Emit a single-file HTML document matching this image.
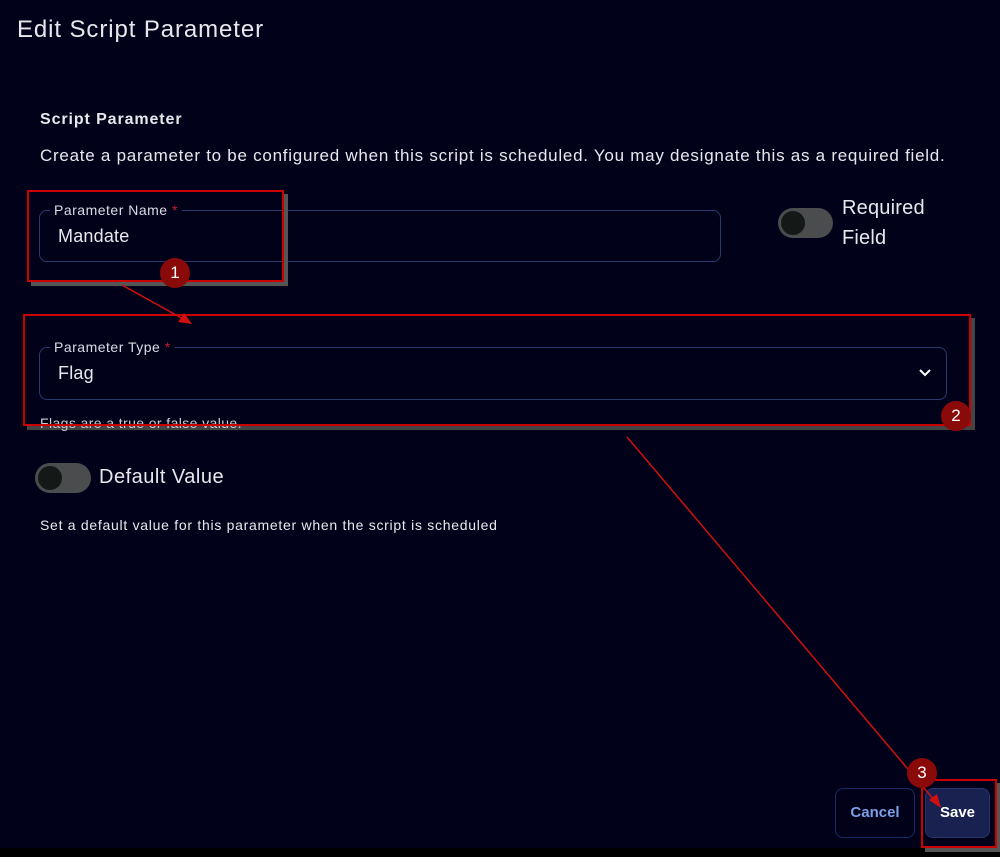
<!DOCTYPE html>
<html><head><style>
*{box-sizing:border-box;margin:0;padding:0}
body{width:1000px;height:857px;background:#02011a;font-family:"Liberation Sans",sans-serif;color:#e8e8ec;position:relative;overflow:hidden}
.a{position:absolute}
.field{position:absolute;border:1px solid #2d3a6e;border-radius:8px}
.lbl{position:absolute;top:-9px;left:10px;background:#02011a;padding:0 4px;font-size:14px;color:#dcdce4;letter-spacing:0.5px}
.lbl b{color:#c0202a;font-weight:normal}
.val{position:absolute;left:18px;top:15px;font-size:18px;letter-spacing:0.2px}
.red{position:absolute;border:2px solid #c00;box-shadow:4px 4px 0 #555}
.badge{position:absolute;width:30px;height:30px;border-radius:50%;background:#8a0a0a;color:#fff;font-size:17px;text-align:center;line-height:30px;z-index:3}
.tog{position:absolute;height:30px;border-radius:15px;background:#4a4c4e}
.tog i{position:absolute;left:3px;top:3px;width:24px;height:24px;border-radius:50%;background:#141816}
</style></head><body>
<div class="a" style="left:17px;top:16px;font-size:24px;letter-spacing:0.9px">Edit Script Parameter</div>
<div class="a" style="left:40px;top:111px;font-size:16px;font-weight:bold;letter-spacing:0.9px">Script Parameter</div>
<div class="a" style="left:40px;top:146px;font-size:17px;letter-spacing:0.74px;white-space:nowrap">Create a parameter to be configured when this script is scheduled. You may designate this as a required field.</div>

<div class="field" style="left:39px;top:210px;width:682px;height:52px"><div class="lbl">Parameter Name <b>*</b></div><div class="val">Mandate</div></div>
<div class="red" style="left:27px;top:190px;width:257px;height:92px"></div>
<div class="badge" style="left:160px;top:258px">1</div>

<div class="tog" style="left:778px;top:208px;width:55px"><i></i></div>
<div class="a" style="left:842px;top:193px;font-size:20px;line-height:30px;letter-spacing:0.2px">Required<br>Field</div>

<div class="field" style="left:39px;top:347px;width:908px;height:53px"><div class="lbl">Parameter Type <b>*</b></div><div class="val">Flag</div>
<svg class="a" style="right:14px;top:20px" width="14" height="10" viewBox="0 0 14 10"><path d="M2 2l5 5 5-5" stroke="#fff" stroke-width="2" fill="none"/></svg></div>
<div class="red" style="left:23px;top:314px;width:948px;height:112px;box-shadow:4px 4px 0 #444"></div>
<div class="a" style="left:40px;top:415px;font-size:14px;color:#ccc;letter-spacing:0.4px;z-index:2">Flags are a true or false value.</div>
<div class="a" style="left:25px;top:424px;width:944px;height:2px;background:#c00;z-index:2"></div>
<div class="badge" style="left:941px;top:401px">2</div>

<div class="tog" style="left:35px;top:463px;width:56px"><i></i></div>
<div class="a" style="left:99px;top:466px;font-size:20px;letter-spacing:0.5px">Default Value</div>
<div class="a" style="left:40px;top:517px;font-size:14px;letter-spacing:0.72px">Set a default value for this parameter when the script is scheduled</div>

<div class="a" style="left:0;top:848px;width:1000px;height:9px;background:#000"></div>
<div class="a" style="left:835px;top:788px;width:80px;height:50px;border:1px solid #1b2a66;border-radius:8px;color:#7d9fe6;font-weight:bold;font-size:15px;text-align:center;line-height:48px">Cancel</div>
<div class="a" style="left:925px;top:788px;width:65px;height:50px;background:#18214f;border:1px solid #26356e;border-radius:8px;color:#fff;font-weight:bold;font-size:15px;text-align:center;line-height:48px">Save</div>
<div class="red" style="left:921px;top:779px;width:76px;height:69px"></div>
<div class="badge" style="left:907px;top:758px">3</div>

<svg class="a" style="left:0;top:0;z-index:2" width="1000" height="857">
<line x1="122" y1="285" x2="185" y2="320" stroke="#d01010" stroke-width="1.5"/>
<polygon points="192,324 178,322 184,313" fill="#d01010"/>
<line x1="627" y1="437" x2="935" y2="801" stroke="#d01010" stroke-width="1.5"/>
<polygon points="941,808 929,800 937,794" fill="#d01010"/>
</svg>
</body></html>
